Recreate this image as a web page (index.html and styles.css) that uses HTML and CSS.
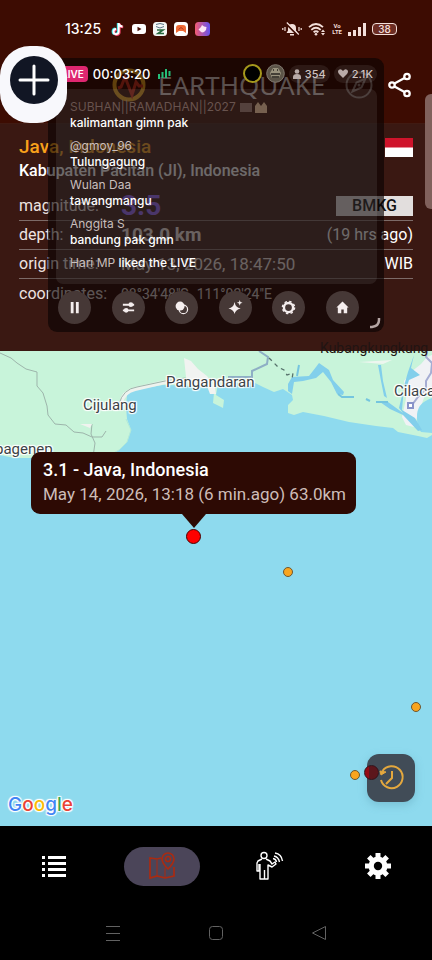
FILE: index.html
```html
<!DOCTYPE html>
<html lang="en">
<head>
<meta charset="utf-8">
<meta name="viewport" content="width=device-width, initial-scale=1">
<title>Earthquake</title>
<link rel="stylesheet" href="styles.css">
</head>
<body>
<header class="top">
  <div class="status">
    <span class="clock">13:25</span>
    <div class="status-apps">
      <svg width="14" height="14" viewBox="0 0 14 14"><g fill="none" stroke-width="2.400"><path d="M7 1v8.400a2.600 2.600 0 1 1-2.600-2.600" stroke="#2fe6e6"/><path d="M8.400 1.600v8.200a2.600 2.600 0 1 1-2.600-2.200M8.400 2c.4 2 2 2.900 3.800 3" stroke="#f04468"/><path d="M7.700 1v8.600a2.600 2.600 0 1 1-2.600-2.600M7.700 1.500c.4 2 2 2.900 3.800 3" stroke="#fff" stroke-width="1.900"/></g></svg>
      <svg width="14" height="14" viewBox="0 0 14 14"><rect y="2" width="14" height="10" rx="3" fill="#fff"/><path d="M5.500 4.700v4.600L9.500 7z" fill="#4a1008"/></svg>
      <svg width="14" height="14" viewBox="0 0 14 14"><rect width="14" height="14" rx="3.500" fill="#f5f7f4"/><path d="M3 2.500q4-2 8 0M3 4.500l4 1.500 4-1.500" stroke="#5b7688" fill="none"/><path d="M4 8h6l-5 3.500h6" fill="none" stroke="#27683d" stroke-width="1.600"/></svg>
      <svg width="14" height="14" viewBox="0 0 14 14"><rect width="14" height="14" rx="3.500" fill="#fff"/><path d="M2 11V6q0-3 3-3h4q3 0 3 3v5L9 9H5z" fill="#ee6a35"/><path d="M4.500 7.500l2.500-2 2.500 2" stroke="#b33421" fill="none"/></svg>
      <svg width="15" height="14" viewBox="0 0 15 14"><defs><linearGradient id="pz"><stop stop-color="#f45c72"/><stop offset="1" stop-color="#6552ee"/></linearGradient></defs><rect width="15" height="14" rx="3.500" fill="url(#pz)"/><path d="M3.500 7.500L6 5l1-2 2 1.500 2.500.5-.5 3-2 2-2 .5-1.500-1z" fill="#fbe6f4"/></svg>
    </div>
    <div class="status-right">
      <svg width="20" height="14" viewBox="0 0 20 14"><path d="M4.500 11h11L14 8.500V6a4 4 0 0 0-8 0v2.500zM8 12h4v1.500H8z" fill="#f3dfda"/><path d="M4 1.500l12 12" stroke="#3d0c02" stroke-width="2"/><path d="M4.800 .5l12 12M3 5v4M.8 6v2M17 5v4M19.200 6v2" stroke="#f3dfda" stroke-width="1.200"/></svg>
      <svg width="18" height="14" viewBox="0 0 18 14"><path d="M1 5.200q7-6.400 14 0M3.300 7.800q4.700-4.200 9.400 0M5.600 10.200q2.400-2 4.800 0" fill="none" stroke="#f3dfda" stroke-width="1.800"/><circle cx="8" cy="12.300" r="1.300" fill="#f3dfda"/><path d="M13 10l2-2.500 2 2.500zM13 11l2 2.500 2-2.500z" fill="#f3dfda"/></svg>
      <span class="volte"><span>Vo</span><span>LTE</span></span>
      <svg width="18" height="13" viewBox="0 0 18 13"><path d="M0 9h3v4H0zM5 7h3v6H5zM10 4h3v9h-3zM15 0h3v13h-3z" fill="#f3dfda"/></svg>
      <span class="battery">38</span>
    </div>
  </div>
  <div class="title-bar">
    <svg width="34" height="34" viewBox="0 0 34 34"><circle cx="17" cy="17" r="14.500" fill="none" stroke="#f6a81c" stroke-width="4"/><path d="M6 20l3-1 4-10 7 18 4-13 3 4h4" fill="none" stroke="#d8331c" stroke-width="3"/></svg>
    <h1>EARTHQUAKE</h1>
    <svg class="compass" width="28" height="28" viewBox="0 0 28 28"><circle cx="14" cy="14" r="12.500" fill="none" stroke="#9a7f79" stroke-width="2"/><path d="M20.500 7.500l-4 9-9 4 4-9z" fill="none" stroke="#9a7f79" stroke-width="2"/><circle cx="14" cy="14" r="1.500" fill="#9a7f79"/></svg>
    <button class="plain" aria-label="Share"><svg width="24" height="26" viewBox="0 0 24 26"><g fill="none" stroke="#fff" stroke-width="2.300"><path d="M6.500 11.500l10-5.500M6.500 14.500l10 5.500"/><circle cx="4" cy="13" r="2.700"/><circle cx="19" cy="4.500" r="2.700"/><circle cx="19" cy="21.500" r="2.700"/></g></svg></button>
  </div>
  <section class="info">
    <div class="place"><h2>Java, Indonesia</h2>
      <svg width="28" height="19" viewBox="0 0 28 19"><path fill="#cf142b" d="M0 0h28v10H0z"/><path fill="#fff" d="M0 9.500h28V19H0z"/></svg></div>
    <p class="region">Kabupaten Pacitan (JI), Indonesia</p>
    <dl>
      <div><dt>magnitude:</dt><dd class="mag">3.5</dd><dd class="source">BMKG</dd></div>
      <div><dt>depth:</dt><dd class="depth">103.0 km</dd><dd class="end">(19 hrs ago)</dd></div>
      <div><dt>origin time:</dt><dd class="time">May 13, 2026, 18:47:50</dd><dd class="end">WIB</dd></div>
      <div><dt>coordinates:</dt><dd class="coords"><span>08°34'48"S</span><span>111°02'24"E</span></dd></div>
    </dl>
  </section>
</header>

<main class="map">
  <svg class="land" viewBox="0 0 432 475" preserveAspectRatio="xMidYMin slice" aria-hidden="true">
    <rect width="432" height="475" fill="#8edaee"/>
    <path d="M0 0H432V84L427 87 418 85 398 81 393 77 376 75 349 71 324 65 303 61 294 64 288 62 288 54 293 49 292 44 283 38 274 41 263 36 253 31 218 33 216 44 224 49 223 57 213 52 214 42 205 35 163 34 133 39 127 44 126 56 127 68 131 79 127 91 119 99 108 105 95 107H40L14 107 0 104z" fill="#c8f4da"/>
    <path d="M126 68L131 79 127 91 119 99 108 105 95 107" fill="none" stroke="#b2ead9"/>
    <path d="M184 7l7 3 7 8 9 7 8 11 1 7-6 0-3-8-16-1-5-8z" fill="#f1f3f1"/>
    <path d="M121 52q2-11 14-14l30-7 20-1" fill="none" stroke="#eef2ee" stroke-width="4"/>
    <path d="M119 53q4-15 18-17l28-6 20-3 8 3M0 2l11 5 6 5 9 6 11 3 0 14 6 7 4 13 1 9 7 9 11 1 8 7 9 1 9 4 10 0 4-6M92 73l-1 10 4 9-2 14" fill="none" stroke="#9db5ab"/>
    <path d="M80 73l12 0-2 4z" fill="#f0f3ef"/>
    <path d="M404 30l7-9 10-8 6-7 5-2v33l-8 10-6 16-4 13-8-2-4-8 4-18z" fill="#f0f2f5"/>
    <path d="M432 47q-16 5-15 20 0 9 4 14l11 1z" fill="#8edaee"/>
    <path d="M292 26l17-1 7-9 3-4 10 7 4 10 11 12-1 3-6-1-6-12-8-10-7 6-13 3-9 1-1 6-1 6-4-3 0-7z" fill="#82cfeb"/>
    <path d="M378 14h3l2 16 4 17-3-2-3-15zM414 4l-3 13 9 7-11 5-2 6-3 0 4-14zM404 36l-5 21 4 5-15-11h-8l10 7 13 6 15 16 4-1-7-12-13-8z" fill="#82cfeb"/>
    <path d="M338 43l4 3 12 0M366 48l4 2M376 51l12 0M297 25l2-11" fill="none" stroke="#75c5df" stroke-width="2"/>
    <path d="M359 11l33-2-9 4z" fill="#edf6ef"/>
    <path d="M228 26h24v-6l15-7 1-7-9-6" fill="none" stroke="#8eafc5" stroke-width="2"/>
    <path d="M412 54l6-8 8-8 0-8 5-8 1-10-6-6 1-6" fill="none" stroke="#a5add3" stroke-width="2"/>
    <rect x="408" y="52" width="5" height="5" fill="#fff" stroke="#8993c9" stroke-width="2"/>
    <path d="M269 7l9 9 6 3 3 5 6-2-1 6" fill="none" stroke="#55706a" stroke-width="1.300" stroke-dasharray="4 4"/>
  </svg>
  <span class="label l-pang">Pangandaran</span>
  <span class="label l-ciju">Cijulang</span>
  <span class="label l-cila">Cilacap</span>
  <span class="label l-page">pagenep</span>
  <span class="label l-kuba">Kubangkungkung</span>
  <i class="quake major q1"></i><i class="quake q2"></i><i class="quake q3"></i><i class="quake q4"></i>
  <div class="callout"><strong>3.1 - Java, Indonesia</strong><span>May 14, 2026, 13:18 (6 min.ago) 63.0km</span></div>
  <div class="google"><span class="b">G</span><span class="r">o</span><span class="y">o</span><span class="b">g</span><span class="g">l</span><span class="r">e</span></div>
  <button class="history" aria-label="History"><svg width="48" height="48" viewBox="0 0 48 48"><g fill="none" stroke="#e4a83e" stroke-width="2"><path d="M15.500 17a11 11 0 1 1-1.500 9M25 17v7l-6 6"/></g><path d="M13 17l1 4 5-3z" fill="#e4a83e" stroke="#e4a83e"/></svg></button>
  <i class="quake past q5"></i>
</main>

<nav class="tabs">
  <button aria-label="List"><svg width="24" height="21" viewBox="0 0 24 21"><path fill="#fff" d="M0 0h3v3H0zM6 0h18v3H6zM0 6h3v3H0zM6 6h18v3H6zM0 12h3v3H0zM6 12h18v3H6zM0 18h3v3H0zM6 18h18v3H6z"/></svg></button>
  <button class="active" aria-label="Map"><svg width="28" height="28" viewBox="0 0 28 28"><g fill="none" stroke="#a92b12" stroke-width="1.700"><path d="M13 6l-4 1-7-1v20l7-2 8 2 9-2V15"/><path d="M9 8v16M17 16v10" stroke-width="1"/><path d="M20 17q-6-6-6-10a6 6 0 0 1 12 0q0 4-6 10z"/><circle cx="20" cy="7" r="2.500"/></g></svg></button>
  <button aria-label="Felt reports"><svg class="person" width="28" height="30" viewBox="0 0 28 30"><g fill="none" stroke="#fff" stroke-width="1.400" stroke-linejoin="round"><circle cx="8" cy="4.500" r="3"/><path d="M6 8l-4 2-1 2v8h2v-7M10 8l4 2 2 3 3-2 1 2-4 3-4-2v14H8.500V19M4 13v15h4.500V19"/><path d="M17 7.500q3 .5 3.500 3.500M18 5q4.500 1 5.500 6M19 2q6.500 1 7.500 8"/></g></svg></button>
  <button aria-label="Settings"><svg width="26" height="26" viewBox="-13 -13 26 26"><g fill="#fff"><circle r="9.500"/><g id="teeth"><path d="M-2.500-13h5v26h-5zM-13-2.500h26v5h-26z"/></g><use href="#teeth" transform="rotate(45)"/></g><circle r="4.200" fill="#000"/></svg></button>
</nav>
<div class="system">
  <button aria-label="Recent"><svg width="16" height="16" viewBox="0 0 16 16"><path d="M1 1.500h14M1 8.500h14M1 15.500h14" stroke="#626262"/></svg></button>
  <button aria-label="Home"><svg width="16" height="16" viewBox="0 0 16 16"><rect x="1.500" y="1.500" width="13" height="13" rx="3" fill="none" stroke="#626262"/></svg></button>
  <button aria-label="Back"><svg width="16" height="16" viewBox="0 0 16 16"><path d="M14.500 1.500v13L1.500 8z" fill="none" stroke="#626262"/></svg></button>
</div>

<aside class="live">
  <div class="live-top">
    <span class="badge">LIVE</span><span class="elapsed">00:03:20</span>
    <svg width="13" height="12" viewBox="0 0 13 12"><path d="M1 6v5M4.500 4v6M8 1v9M11.500 3v5" stroke="#25bd78" stroke-width="2"/></svg>
    <div class="viewers">
      <i class="ring"></i>
      <svg width="19" height="19" viewBox="0 0 19 19"><circle cx="9.500" cy="9.500" r="8.800" fill="#5b5448" stroke="#817970"/><path d="M4 9l3-5h5l3 5-2 5H6z" fill="#99937e"/><path d="M5 10h9M6 13h7M7 6h1M11 6h1" stroke="#292620" stroke-width="1.500"/></svg>
      <span class="pill"><svg width="8" height="10" viewBox="0 0 8 10"><circle cx="4" cy="2.500" r="2.300"/><path d="M0 10V8q0-3 4-3t4 3v2z"/></svg>354</span>
      <span class="pill"><svg width="10" height="9" viewBox="0 0 10 9"><path d="M5 9L1 5Q-1 2 1 .7T5 2Q7-.6 9 .7T9 5z"/></svg>2.1K</span>
    </div>
  </div>
  <div class="chat">
    <p><span class="gone">SUBHAN||RAMADHAN||2027 <svg width="27" height="11" viewBox="0 0 27 11"><path fill="#54413d" d="M0 1h12v9H0z"/><path fill="#76604f" d="M15 11V4l3-4 3 4 3-4 3 4v7z"/></svg></span><b>kalimantan gimn pak</b></p>
    <p><span>@gmoy_96</span><b>Tulungagung</b></p>
    <p><span>Wulan Daa</span><b>tawangmangu</b></p>
    <p><span>Anggita S</span><b>bandung pak gmn</b></p>
    <p class="like"><span>Hari MP <b>liked the LIVE</b></span></p>
  </div>
  <div class="tools">
    <button aria-label="Pause"><svg viewBox="0 0 16 16"><path d="M4 2h3v12H4zM9.500 2h3v12h-3z"/></svg></button>
    <button aria-label="Adjust"><svg viewBox="0 0 16 16"><path d="M2 4h12v2H2zM2 10h12v2H2z"/><circle cx="10.500" cy="5" r="2.500"/><circle cx="5.500" cy="11" r="2.500"/></svg></button>
    <button aria-label="Effects"><svg viewBox="0 0 16 16"><circle cx="10" cy="10" r="4.500" fill="none" stroke="#f5eeee" stroke-width="1.300"/><circle cx="6.500" cy="6.500" r="4.800"/></svg></button>
    <button aria-label="Enhance"><svg viewBox="0 0 16 16"><path d="M7 2q1 6 6.500 7Q8 10 7 15 6 10 .5 9 6 8 7 2zM12.500 0l.8 2.200 2.200.8-2.200.8-.8 2.200-.8-2.200L9.500 3l2.200-.8z"/></svg></button>
    <button aria-label="Live settings"><svg viewBox="0 0 16 16"><circle cx="8" cy="8" r="4.900" fill="none" stroke="#f5eeee" stroke-width="2.600"/><circle cx="8" cy="8" r="6.500" fill="none" stroke="#f5eeee" stroke-width="1.500" stroke-dasharray="2.600 2.500"/></svg></button>
    <button aria-label="Live home"><svg viewBox="0 0 16 16"><path d="M8 1.500L1.500 8H3v6h3.700v-4h2.600v4H13V8h1.500z"/></svg></button>
  </div>
  <svg class="grip" width="12" height="12" viewBox="0 0 12 12"><path d="M10 1v2q0 6-7 7H1" fill="none" stroke="#b5a5a3" stroke-width="2.500"/></svg>
</aside>
<button class="bubble" aria-label="Add"><svg width="48" height="48" viewBox="0 0 48 48"><circle cx="24" cy="24" r="24" fill="#111624"/><path d="M24 10v28M10 24h28" stroke="#fff" stroke-width="3" stroke-linecap="round"/></svg></button>
<i class="handle"></i>
</body>
</html>
```

FILE: styles.css
```css
* { box-sizing: border-box; }
body {
  margin: 0;
  min-height: 100vh;
  display: flex;
  flex-direction: column;
  position: relative;
  overflow-x: hidden;
  background: #000;
  color: #fff;
  font: 16px/24px Roboto, sans-serif;
}
h1, h2, p, dl, dd { margin: 0; }
button { padding: 0; border: 0; background: none; font: inherit; color: inherit; }
svg { display: block; flex: none; }

.top { background: #3d0c02; }
.status {
  height: 58px;
  padding: 0 35px 0 65px;
  display: flex;
  align-items: center;
}
.clock { width: 46px; font: 500 14px/20px Inter, sans-serif; }
.status-apps { display: flex; gap: 7px; }
.status-right { margin-left: auto; display: flex; align-items: center; gap: 6px; }
.volte { display: flex; flex-direction: column; color: #f3dfda; font: 700 6px/6px Roboto, sans-serif; text-align: center; }
.battery {
  width: 25px;
  height: 12px;
  border: 1px solid #f3dfda;
  border-radius: 4px;
  background: #6c2d23;
  color: #f3dfda;
  font: 500 10px/10px Inter, sans-serif;
  text-align: center;
}
.title-bar { height: 65px; padding: 0 20px 12px 112px; display: flex; align-items: center; }
h1 { margin-left: 12px; font: 400 26px/32px "Noto Sans", sans-serif; color: #e5d5d1; }
.compass { margin-left: auto; margin-right: 15px; }

.info { height: 228px; padding: 11px 19px 0; background: #3a1812; border-top: 1px solid #401a12; }
.place { display: flex; justify-content: space-between; align-items: center; }
h2 { font: 500 19px/24px Roboto, sans-serif; color: #f9a11b; }
.region { font-weight: 500; margin-bottom: 9px; }
dl > div { display: flex; align-items: center; height: 29px; border-bottom: 1px solid #7d6b68; }
dl > div:last-child { border: 0; }
dt { width: 102px; color: #eee3e1; }
dd { color: #f0e4e1; }
.mag { font: 700 28px/24px Roboto, sans-serif; color: #9461ff; }
.depth { font-size: 19px; font-weight: 700; }
.time { font-size: 17px; }
.coords { display: flex; gap: 8px; font-size: 14px; }
.end { margin-left: auto; color: #fff; }
.source { margin-left: auto; width: 77px; background: #e2dedd; color: #111; font-weight: 500; line-height: 20px; text-align: center; }

.map { flex: 1; position: relative; min-height: 475px; background: #8edaee; }
.land { position: absolute; inset: 0; width: 100%; height: 100%; }
.label {
  position: absolute;
  color: #3c4347;
  font-size: 15px;
  line-height: 20px;
  white-space: nowrap;
  text-shadow: 0 0 2px #fff, 1px 1px 1px #fff, -1px -1px 1px #fff, 1px -1px 1px #fff, -1px 1px 1px #fff;
}
.l-pang { left: 166px; top: 21px; }
.l-ciju { left: 83px; top: 44px; }
.l-cila { left: 394px; top: 30px; }
.l-page { left: -5px; top: 88px; }
.l-kuba { left: 320px; top: -13px; font-size: 14px; color: #211412; text-shadow: none; }
.quake {
  position: absolute;
  width: 10px;
  height: 10px;
  border: 1px solid #6d5631;
  border-radius: 50%;
  background: #f9a51f;
}
.major { width: 15px; height: 15px; background: #fe0000; border-color: #490000; }
.past { width: 15px; height: 15px; background: linear-gradient(90deg, #950b14 30%, #5c161c 31%); border-color: #34131a; }
.q1 { left: 186px; top: 178px; }
.q2 { left: 283px; top: 216px; }
.q3 { left: 411px; top: 351px; }
.q4 { left: 350px; top: 419px; }
.q5 { left: 364px; top: 414px; }
.callout {
  position: absolute;
  left: 31px;
  top: 101px;
  padding: 6px 10px 8px 12px;
  display: flex;
  flex-direction: column;
  border-radius: 9px;
  background: #2d0a04;
  color: #cdbdb8;
  font-size: 17px;
  white-space: nowrap;
}
.callout strong { font-size: 18px; font-weight: 500; color: #fff; }
.callout::after {
  content: "";
  position: absolute;
  left: 151px;
  top: 100%;
  border: 12px solid transparent;
  border-top: 14px solid #2d0a04;
  border-bottom: 0;
}
.google {
  position: absolute;
  left: 8px;
  bottom: 8px;
  font: 500 19px/26px Inter, sans-serif;
  text-shadow: 0 0 2px #fff, 1px 1px 1px #fff, -1px -1px 1px #fff, 1px -1px 1px #fff, -1px 1px 1px #fff;
}
.b { color: #4285f4; }
.r { color: #ea4335; }
.y { color: #fbbc05; }
.g { color: #34a853; }
.history { position: absolute; right: 17px; bottom: 24px; border-radius: 12px; background: #414c57; box-shadow: 0 3px 8px #5798ad66; }

.tabs { height: 80px; display: grid; grid-template-columns: repeat(4, 1fr); justify-items: center; align-items: center; }
.tabs button { width: 76px; height: 39px; display: grid; place-items: center; }
.tabs .active { border-radius: 20px; background: #4b4559; }
.system { height: 54px; display: flex; justify-content: center; gap: 87px; align-items: center; }

.live {
  position: absolute;
  left: 48px;
  right: 48px;
  top: 58px;
  padding: 0 7px 8px 8px;
  border-radius: 9px;
  background: rgba(10, 3, 3, 0.64);
  font: 400 12px/16px Inter, sans-serif;
}
.live-top { height: 31px; display: flex; align-items: center; }
.badge { margin-left: 2px; padding: 0 4px; border-radius: 4px; background: #df2770; font-size: 10px; font-weight: 600; }
.elapsed { margin: 0 8px 0 5px; font-size: 13px; font-weight: 500; }
.viewers { margin-left: auto; display: flex; align-items: center; gap: 4px; }
.ring { width: 19px; height: 19px; border: 2px solid #a6981c; border-radius: 50%; background: #000; }
.pill { display: flex; align-items: center; gap: 4px; padding: 1px 4px; border-radius: 9px; background: #ffffff14; color: #cfc3c1; font-size: 11px; font-weight: 500; }
.pill svg { fill: #b8aaa8; }
.chat {
  height: 195px;
  padding: 10px 14px;
  border-radius: 7px;
  background: rgba(255, 255, 255, 0.08);
  display: flex;
  flex-direction: column;
  gap: 7px;
}
.chat p { display: flex; flex-direction: column; color: #c9bfbd; }
.chat b { font-weight: 500; color: #fff; }
.chat .gone { color: #68534e; display: flex; align-items: center; gap: 4px; }
.tools { padding: 7px 18px 0 2px; display: flex; justify-content: space-between; }
.tools button { width: 33px; height: 33px; border-radius: 50%; background: #463836; display: grid; place-items: center; }
.tools svg { width: 15px; height: 15px; fill: #f5eeee; }
.grip { position: absolute; right: 3px; bottom: 3px; }
.bubble {
  position: absolute;
  left: 0;
  top: 46px;
  width: 67px;
  height: 77px;
  border-radius: 30px;
  background: #f8f8fc;
  display: grid;
  place-items: center;
  padding-bottom: 9px;
}
.handle { position: absolute; right: 0; top: 94px; width: 7px; height: 115px; border-radius: 6px 0 0 6px; background: #80615c; }
```
